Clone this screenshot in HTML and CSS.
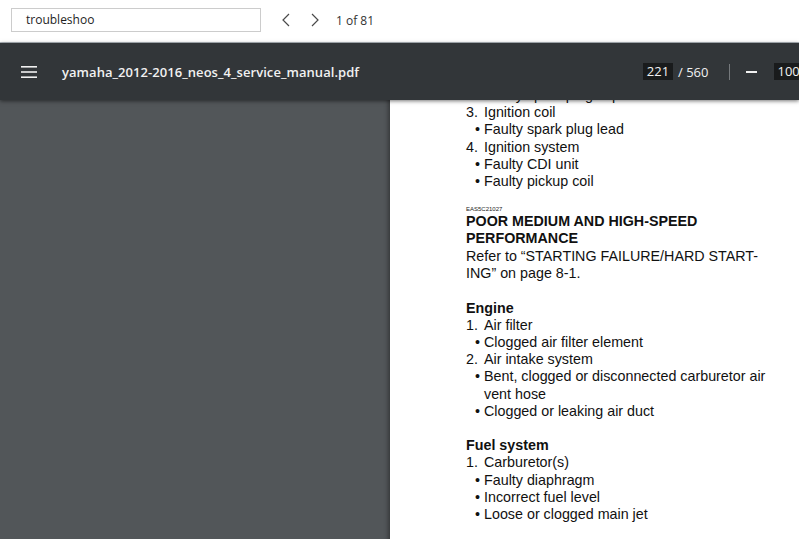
FILE: index.html
```html
<!DOCTYPE html>
<html lang="en">
<head>
    <meta charset="UTF-8">
    <meta name="viewport" content="width=device-width, initial-scale=1.0">
    <title>yamaha_2012-2016_neos_4_service_manual.pdf</title>
    <link rel="stylesheet" href="styles.css">
</head>
<body>
    <div class="findbar">
        <div class="find-input">troubleshoo</div>
        <div class="find-btn prev">
            <svg width="10" height="14" viewBox="0 0 10 14"><path d="M8 1 L2 7 L8 13" fill="none" stroke="#4a4a4a" stroke-width="1.2"/></svg>
        </div>
        <div class="find-btn">
            <svg width="10" height="14" viewBox="0 0 10 14"><path d="M2 1 L8 7 L2 13" fill="none" stroke="#4a4a4a" stroke-width="1.2"/></svg>
        </div>
        <div class="find-count">1 of 81</div>
    </div>

    <div class="toolbar">
        <div class="toolbar-left">
            <svg class="menu-icon" width="16" height="12" viewBox="0 0 16 12">
                <rect x="0" y="0" width="16" height="1.6" fill="#f1f1f1"/>
                <rect x="0" y="5.2" width="16" height="1.6" fill="#f1f1f1"/>
                <rect x="0" y="10.4" width="16" height="1.6" fill="#f1f1f1"/>
            </svg>
            <div class="title">yamaha_2012-2016_neos_4_service_manual.pdf</div>
        </div>
        <div class="page-nav">
            <div class="num-box">221</div>
            <span class="page-total">/ 560</span>
        </div>
        <div class="divider"></div>
        <div class="zoom-out"></div>
        <div class="num-box zoom-box">100%</div>
    </div>

    <div class="viewer">
        <div class="page">
            <div class="content">
                <div class="row bullet"><span class="mark">•</span>Faulty spark plug cap</div>
                <div class="row"><span class="mark">3.</span>Ignition coil</div>
                <div class="row bullet"><span class="mark">•</span>Faulty spark plug lead</div>
                <div class="row"><span class="mark">4.</span>Ignition system</div>
                <div class="row bullet"><span class="mark">•</span>Faulty CDI unit</div>
                <div class="row bullet"><span class="mark">•</span>Faulty pickup coil</div>

                <div class="code">EAS5C21027</div>
                <div class="heading">POOR MEDIUM AND HIGH-SPEED<br>PERFORMANCE</div>
                <p class="text">Refer to “STARTING FAILURE/HARD START-<br>ING” on page 8-1.</p>

                <div class="subhead">Engine</div>
                <div class="row"><span class="mark">1.</span>Air filter</div>
                <div class="row bullet"><span class="mark">•</span>Clogged air filter element</div>
                <div class="row"><span class="mark">2.</span>Air intake system</div>
                <div class="row bullet"><span class="mark">•</span><span>Bent, clogged or disconnected carburetor air<br>vent hose</span></div>
                <div class="row bullet"><span class="mark">•</span>Clogged or leaking air duct</div>

                <div class="subhead">Fuel system</div>
                <div class="row"><span class="mark">1.</span>Carburetor(s)</div>
                <div class="row bullet"><span class="mark">•</span>Faulty diaphragm</div>
                <div class="row bullet"><span class="mark">•</span>Incorrect fuel level</div>
                <div class="row bullet"><span class="mark">•</span>Loose or clogged main jet</div>

                <div class="code tail">EAS5C21028</div>
            </div>
        </div>
    </div>
</body>
</html>
```

FILE: styles.css
```css
* {
    margin: 0;
    padding: 0;
    box-sizing: border-box;
}

body {
    width: 799px;
    height: 539px;
    overflow: hidden;
    background: #525659;
    font-family: "Open Sans", "Noto Sans", sans-serif;
}

/* find bar */
.findbar {
    height: 43px;
    background: #ffffff;
    border-bottom: 1px solid #b4bac0;
    display: flex;
    align-items: center;
    padding-left: 11px;
    padding-bottom: 2px;
}

.find-input {
    width: 250px;
    height: 24px;
    border: 1px solid #cccccc;
    padding-left: 14px;
    font-size: 12px;
    line-height: 22px;
    color: #1e1e1e;
}

.find-btn {
    width: 29px;
    display: flex;
    justify-content: center;
    align-items: center;
}

.find-btn.prev {
    margin-left: 10px;
}

.find-count {
    margin-left: 7px;
    font-size: 12px;
    color: #333;
}

/* pdf toolbar */
.toolbar {
    position: relative;
    z-index: 2;
    height: 57px;
    background: #323639;
    box-shadow: 0 1px 4px rgba(0, 0, 0, 0.55);
    display: flex;
    align-items: center;
    white-space: nowrap;
    overflow: hidden;
    color: #f1f1f1;
    font-size: 13px;
}

.toolbar-left {
    width: 643px;
    flex-shrink: 0;
    display: flex;
    align-items: center;
    padding-left: 21px;
}

.menu-icon {
    margin-right: 25px;
}

.title {
    font-weight: 600;
    font-size: 13px;
    letter-spacing: 0.05px;
}

.page-nav {
    display: flex;
    align-items: center;
    flex-shrink: 0;
}

.num-box {
    background: #191b1c;
    height: 17px;
    line-height: 17px;
    width: 30px;
    text-align: center;
    font-size: 13px;
    flex-shrink: 0;
}

.page-total {
    margin-left: 5px;
}

.divider {
    width: 1px;
    height: 16px;
    background: #75797c;
    margin-left: 21px;
    flex-shrink: 0;
}

.zoom-out {
    width: 11px;
    height: 2px;
    background: #f1f1f1;
    margin-left: 16px;
    flex-shrink: 0;
}

.zoom-box {
    width: 44px;
    margin-left: 17px;
    text-align: left;
    padding-left: 3px;
}

/* document */
.viewer {
    height: 439px;
    overflow: hidden;
    padding-left: 390px;
}

.page {
    width: 520px;
    height: 600px;
    background: #ffffff;
    box-shadow: -2px 0 4px rgba(0, 0, 0, 0.35);
}

.content {
    padding-left: 76px;
    margin-top: -13px;
    font-family: "Liberation Sans", Arial, sans-serif;
    font-size: 14.3px;
    line-height: 17.2px;
    color: #111;
}

.row {
    display: flex;
}

.row .mark {
    width: 18px;
    flex-shrink: 0;
}

.row.bullet {
    padding-left: 9px;
}

.row.bullet .mark {
    width: 9px;
}

.code {
    font-size: 6px;
    line-height: 8px;
    margin-top: 14.5px;
    color: #222;
}

.code.tail {
    margin-top: 17px;
}

.heading {
    font-weight: bold;
    line-height: 17.6px;
}

.text {
    margin-bottom: 17.2px;
}

.subhead {
    font-weight: bold;
}

.row + .subhead {
    margin-top: 17.2px;
}
```
